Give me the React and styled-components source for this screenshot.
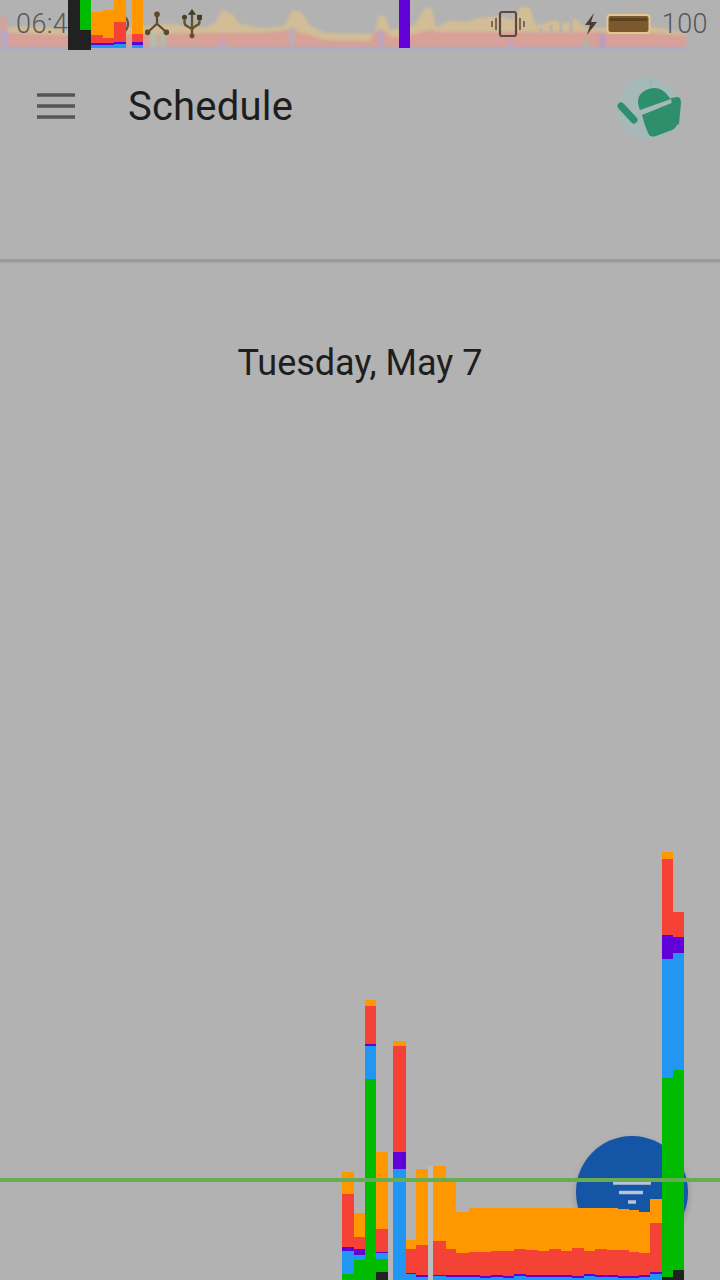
import React from "react";
import styled, { createGlobalStyle } from "styled-components";

const Global = createGlobalStyle`
  html, body { margin: 0; padding: 0; background: #b2b2b2; }
  #root { width: 720px; height: 1280px; overflow: hidden; }
`;

const Page = styled.div`
  position: relative;
  width: 720px;
  height: 1280px;
  overflow: hidden;
  background: #b2b2b2;
  font-family: Roboto, "Liberation Sans", sans-serif;
  display: flex;
  flex-direction: column;
`;

const StatusBar = styled.header`
  position: relative;
  height: 50px;
  flex: none;
  display: flex;
  align-items: center;
  padding: 0 12px 2px 16px;
  box-sizing: border-box;
  color: #585858;
  font-size: 27px;
  font-weight: 300;
`;

const Clock = styled.span`
  position: relative;
  width: 52px;
  white-space: nowrap;
  letter-spacing: 0.4px;
`;

const StatusLeft = styled.div`
  position: relative;
  display: flex;
  align-items: center;
  margin-left: 36px;
  gap: 13px;
`;

const StatusRight = styled.div`
  position: relative;
  display: flex;
  align-items: center;
  margin-left: auto;
  gap: 3px;
`;

const Level = styled.span`
  margin-left: 7px;
  letter-spacing: 0.4px;
`;

const Battery = styled.svg`
  width: 46px;
  height: 24px;
  margin-left: 4px;
`;

const TopStrip = styled.svg`
  position: absolute;
  left: 0;
  top: 0;
  width: 720px;
  height: 52px;
`;

const Haze = styled.g`
  filter: blur(1.6px);
`;

const Toolbar = styled.div`
  height: 112px;
  flex: none;
  display: flex;
  align-items: center;
  padding: 0 36px;
`;

const Menu = styled.svg`
  width: 40px;
  height: 32px;
  flex: none;
`;

const Title = styled.h1`
  margin: 0 0 0 52px;
  font-size: 40px;
  font-weight: 400;
  color: #1e1e1e;
  letter-spacing: 0.2px;
`;

const Avatar = styled.svg`
  width: 68px;
  height: 68px;
  margin-left: auto;
  flex: none;
  filter: blur(0.7px);
`;

const Tabs = styled.div`
  height: 97px;
  flex: none;
  border-bottom: 3px solid #9a9a9a;
  box-shadow: 0 2px 2px -1px rgba(0, 0, 0, 0.08);
`;

const DateHeading = styled.h2`
  margin: 77px 0 0;
  text-align: center;
  font-size: 36px;
  line-height: 48px;
  font-weight: 400;
  color: #1e1e1e;
`;

const Fab = styled.button`
  position: absolute;
  left: 576px;
  top: 1136px;
  width: 112px;
  height: 112px;
  border: 0;
  padding: 0;
  border-radius: 50%;
  background: #1555a6;
  display: flex;
  flex-direction: column;
  align-items: center;
  justify-content: flex-start;
  box-shadow: 0 3px 6px rgba(0, 0, 0, 0.2);
`;

const FabIcon = styled.svg`
  width: 44px;
  height: 32px;
  margin-top: 44px;
`;

const Profile = styled.svg`
  position: absolute;
  left: 0;
  top: 0;
  width: 720px;
  height: 1280px;
  pointer-events: none;
`;

const O = "#ff9800", R = "#f44336", P = "#6200d8", B = "#2196f3", G = "#00bb00", K = "#212121";

const columns = [
  [342, 12, [O, 1172], [R, 1194], [P, 1247], [B, 1251], [G, 1274]],
  [354, 11, [O, 1213], [R, 1237], [P, 1249], [B, 1255], [G, 1260]],
  [365, 11, [O, 1000], [R, 1006], [P, 1044], [B, 1046], [G, 1079]],
  [376, 12, [O, 1152], [R, 1229], [P, 1252], [B, 1253], [G, 1259], [K, 1272]],
  [393, 13, [O, 1041], [R, 1046], [P, 1152], [B, 1169]],
  [406, 10, [O, 1240], [R, 1249], [P, 1273], [B, 1274]],
  [416, 12, [O, 1169], [R, 1245], [P, 1275], [B, 1277]],
  [433, 13, [O, 1166], [R, 1241], [P, 1275], [B, 1276]],
  [446, 10, [O, 1182], [R, 1249], [P, 1275], [B, 1277]],
  [456, 13, [O, 1212], [R, 1253], [P, 1275], [B, 1277]],
  [469, 11, [O, 1208], [R, 1252], [P, 1275], [B, 1277]],
  [480, 11, [O, 1208], [R, 1252], [P, 1276], [B, 1278]],
  [491, 12, [O, 1208], [R, 1251], [P, 1275], [B, 1277]],
  [503, 11, [O, 1208], [R, 1251], [P, 1276], [B, 1278]],
  [514, 12, [O, 1208], [R, 1249], [P, 1274], [B, 1276]],
  [526, 12, [O, 1208], [R, 1250], [P, 1275], [B, 1277]],
  [538, 11, [O, 1208], [R, 1251], [P, 1275], [B, 1277]],
  [549, 12, [O, 1208], [R, 1249], [P, 1275], [B, 1277]],
  [561, 11, [O, 1208], [R, 1251], [P, 1275], [B, 1277]],
  [572, 12, [O, 1208], [R, 1248], [P, 1276], [B, 1278]],
  [584, 11, [O, 1208], [R, 1251], [P, 1274], [B, 1276]],
  [595, 12, [O, 1208], [R, 1249], [P, 1275], [B, 1277]],
  [607, 11, [O, 1208], [R, 1250], [P, 1275], [B, 1277]],
  [618, 11, [O, 1209], [R, 1250], [P, 1276], [B, 1278]],
  [629, 10, [O, 1210], [R, 1252], [P, 1276], [B, 1278]],
  [639, 11, [O, 1212], [R, 1253], [P, 1275], [B, 1277]],
  [650, 12, [O, 1199], [R, 1223], [P, 1272], [B, 1274]],
  [662, 11, [O, 852], [R, 859], [P, 935], [B, 959], [G, 1078], [K, 1277]],
  [673, 11, [R, 912], [P, 937], [B, 953], [G, 1070], [K, 1270]],
];

const topColumns = [
  [68, 12, [K, 0]],
  [80, 11, [G, 0], [K, 30]],
  [91, 12, [O, 12], [R, 35], [P, 43], [B, 45]],
  [103, 11, [O, 10], [R, 38], [P, 43], [B, 45]],
  [114, 12, [O, 0], [R, 22], [P, 42], [B, 44]],
  [132, 11, [O, 0], [R, 34], [P, 42], [B, 45]],
  [399, 11, [P, 0]],
];

const Bars = ({ items, bottom }) =>
  items.map(([x, w, ...rest], i) =>
    rest.map(([fill, top], j) => (
      <rect
        key={`${i}-${j}`}
        x={x}
        y={top}
        width={w}
        height={(j + 1 < rest.length ? rest[j + 1][1] : bottom) - top}
        fill={fill}
      />
    ))
  );

const band = (points) =>
  `0,48 ${points.map(([x, y]) => `${x},${y}`).join(" ")} 686,48`;

const yellowBand = [[0,28],[30,26],[68,30],[145,26],[170,24],[205,28],[216,22],[222,10],[232,14],[240,24],[262,28],[285,26],[292,10],[302,12],[310,26],[325,33],[375,34],[378,16],[386,16],[390,30],[412,26],[418,20],[424,8],[432,8],[436,28],[450,20],[468,22],[478,18],[500,16],[512,20],[522,6],[530,8],[536,26],[555,20],[565,24],[575,18],[585,28],[610,28],[640,26],[660,28],[686,34]];
const redBand = [[0,16],[6,18],[8,33],[60,35],[150,34],[200,33],[260,33],[290,30],[305,34],[325,40],[370,41],[377,30],[386,32],[392,38],[415,34],[430,30],[438,32],[500,32],[560,32],[640,32],[686,36]];

const tints = [
  [2, 30, 6, 16, "#b4a8cc"],
  [150, 32, 7, 16, "#b0c0a8"],
  [160, 32, 6, 16, "#b0baa8"],
  [218, 40, 8, 8, "#c4a4b8"],
  [289, 28, 6, 18, "#bcacb4"],
  [378, 30, 6, 16, "#bca4c0"],
  [508, 40, 6, 8, "#c4a4bc"],
  [583, 40, 6, 8, "#b4b4a4"],
  [600, 34, 5, 14, "#b49cc8"],
];

const App = () => (
  <Page>
    <Global />
    <StatusBar>
      <TopStrip viewBox="0 0 720 52">
        <Haze>
          <polygon points={band(yellowBand)} fill="#d2bd96" />
          <polygon points={band(redBand)} fill="#d8a097" />
          {tints.map(([x, y, w, h, fill]) => (
            <rect key={x} x={x} y={y} width={w} height={h} fill={fill} />
          ))}
          <rect x="0" y="47" width="686" height="3" fill="#a9adc2" />
        </Haze>
      </TopStrip>
      <Clock>06:45</Clock>
      <StatusLeft>
        <svg width="28" height="28" viewBox="0 0 28 28">
          <circle cx="14" cy="14" r="10" fill="none" stroke="#6a5030" strokeWidth="2.2" />
        </svg>
        <svg width="24" height="28" viewBox="0 0 28 32.600">
          <g stroke="#5a4a30" strokeWidth="2.6" fill="#5a4a30">
            <line x1="14" y1="6" x2="14" y2="16" />
            <line x1="14" y1="16" x2="4" y2="25" />
            <line x1="14" y1="16" x2="24" y2="25" />
            <circle cx="14" cy="5" r="2" />
            <circle cx="3" cy="26" r="2" />
            <circle cx="25" cy="26" r="2" />
          </g>
        </svg>
        <svg width="20" height="30" viewBox="0 0 24 36">
          <g stroke="#65502c" strokeWidth="2.8" fill="none">
            <line x1="12" y1="4" x2="12" y2="32" />
            <path d="M3 13v3q0 4 4 5l5 3l5-4q4-1 4-5v-3" />
          </g>
          <path d="M12 0l5 7H7z" fill="#4a3c24" />
          <circle cx="3" cy="10" r="3" fill="#4a3c24" />
          <rect x="18" y="7" width="6" height="6" fill="#4a3c24" />
          <circle cx="12" cy="32" r="3" fill="#65502c" />
        </svg>
      </StatusLeft>
      <StatusRight>
        <svg width="34" height="28" viewBox="0 0 34 28">
          <rect x="9" y="2" width="16" height="24" rx="2" fill="none" stroke="#5e4844" strokeWidth="2.2" />
          <path d="M5 8v12M1 11v6M29 8v12M33 11v6" stroke="#7a6a55" strokeWidth="2" />
        </svg>
        <svg width="52" height="24" viewBox="0 0 52 24">
          <path d="M13 22v-6M23 22V13M33 22V9M43 22V4" stroke="#b8b4a8" strokeWidth="3.4" />
        </svg>
        <svg width="16" height="24" viewBox="0 0 16 24">
          <path d="M11 1L2 13h5l-3 10 10-13H8z" fill="#4a3e34" />
        </svg>
        <Battery viewBox="0 0 46 24">
          <rect x="1.500" y="3" width="42" height="18" rx="3" fill="#7a5a2c" stroke="#e6c88e" strokeWidth="2" />
          <rect x="4" y="6" width="37" height="3" fill="#5a4222" />
        </Battery>
        <Level>100</Level>
      </StatusRight>
    </StatusBar>
    <Toolbar>
      <Menu viewBox="0 0 40 32">
        <path d="M1 5h38M1 16h38M1 27h38" stroke="#555" strokeWidth="3.6" />
      </Menu>
      <Title>Schedule</Title>
      <Avatar viewBox="0 0 68 68">
        <g transform="translate(-616 -72)">
          <circle cx="648" cy="108" r="31" fill="#a6b8b8" />
          <path d="M640 110Q634 96 646 90Q660 84 669 97Q670 98 671 99z" fill="#2e8f6c" />
          <path d="M642 115L674 102L677 123Q677 128 672 130L656 136Q650 138 648 133Q644 124 642 115z" fill="#2e8f6c" />
          <path d="M671 98L678 97Q681 98 681 103L679 124L675 126z" fill="#2e8f6c" />
          <path d="M621 106L634 120" stroke="#2e8f6c" strokeWidth="7" strokeLinecap="round" />
          <path d="M651 86V78" stroke="#98b8b4" strokeWidth="3" />
        </g>
      </Avatar>
    </Toolbar>
    <Tabs />
    <DateHeading>Tuesday, May 7</DateHeading>
    <Fab aria-label="Filter">
      <FabIcon viewBox="0 0 44 32">
        <path d="M3 3h38M9 12.500h24M18 22h8" stroke="#b9c4d8" strokeWidth="3.4" />
      </FabIcon>
    </Fab>
    <Profile viewBox="0 0 720 1280">
      <Bars items={columns} bottom={1280} />
      <rect x="388" y="1152" width="5" height="128" fill="#c4bcc4" opacity="0.4" />
      <rect x="428" y="1166" width="5" height="114" fill="#c4c4cc" opacity="0.6" />
      <rect x="0" y="1178" width="720" height="4" fill="#66ad52" />
      <Bars items={topColumns.slice(0, 2)} bottom={50} />
      <Bars items={topColumns.slice(2)} bottom={48} />
    </Profile>
  </Page>
);

export default App;
